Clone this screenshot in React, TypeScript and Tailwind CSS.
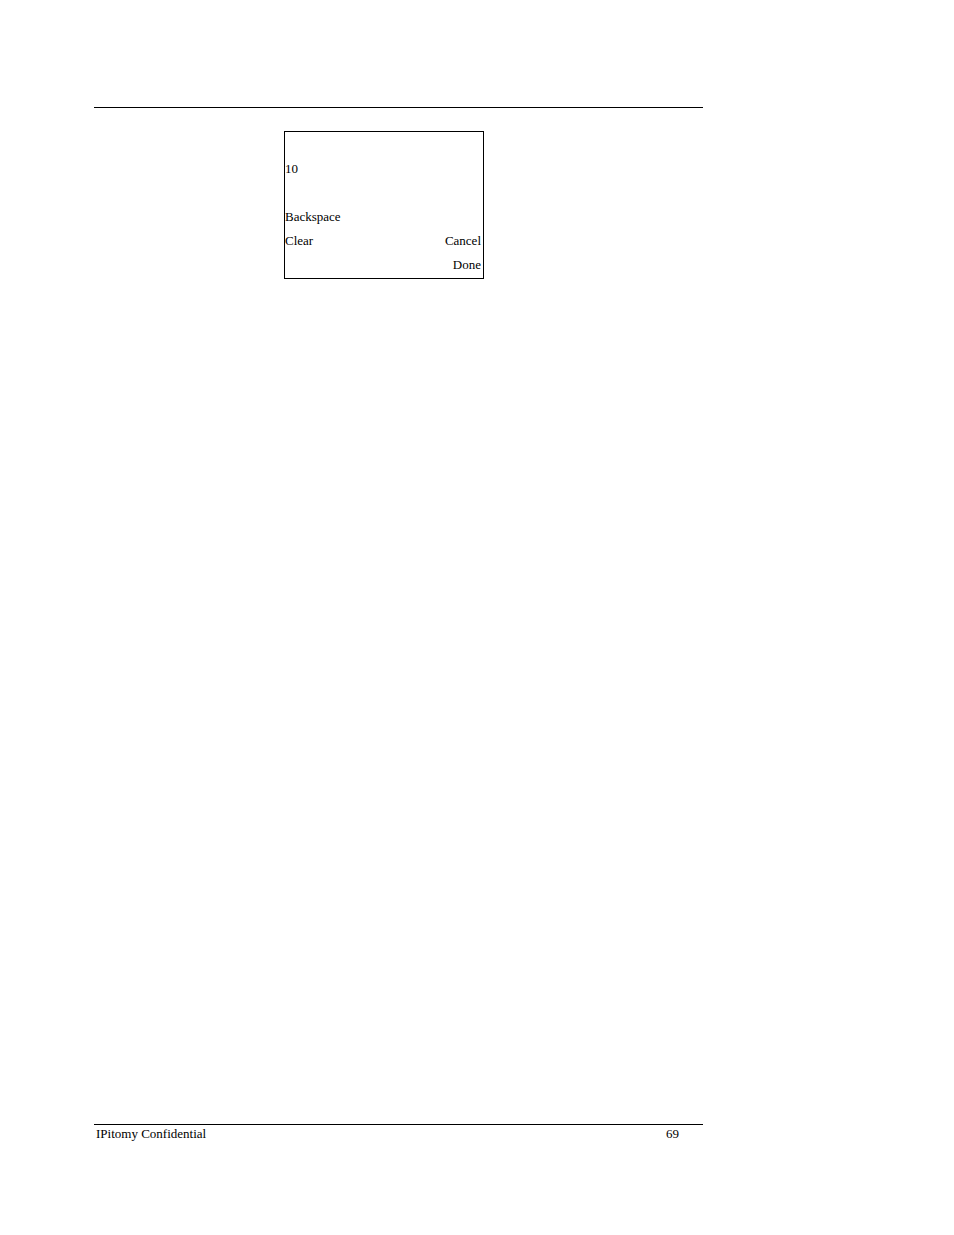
import React from "react"

interface ScreenRow {
  left?: string
  right?: string
}

const rows: ScreenRow[] = [
  {},
  { left: "10" },
  {},
  { left: "Backspace" },
  { left: "Clear", right: "Cancel" },
  { right: "Done" },
]

function PhoneScreen({ rows }: { rows: ScreenRow[] }) {
  return (
    <div className="mx-auto w-[200px] border border-black py-px pr-0.5">
      {rows.map((row, i) => (
        <div key={i} className="flex h-6 items-center justify-between">
          <span>{row.left}</span>
          <span>{row.right}</span>
        </div>
      ))}
    </div>
  )
}

export default function App() {
  return (
    <div className="flex min-h-screen flex-col bg-white pt-[107px] pr-[251px] pb-[93px] pl-[94px] font-['Liberation_Serif',serif] text-[13px] leading-4 text-black">
      {/* Header rule */}
      <header className="border-t border-black" />

      <main className="flex-1 pt-[23px] pr-[29px]">
        <PhoneScreen rows={rows} />
      </main>

      {/* Footer */}
      <footer className="flex justify-between border-t border-black pt-px pr-6 pl-0.5">
        <span>IPitomy Confidential</span>
        <span>69</span>
      </footer>
    </div>
  )
}
